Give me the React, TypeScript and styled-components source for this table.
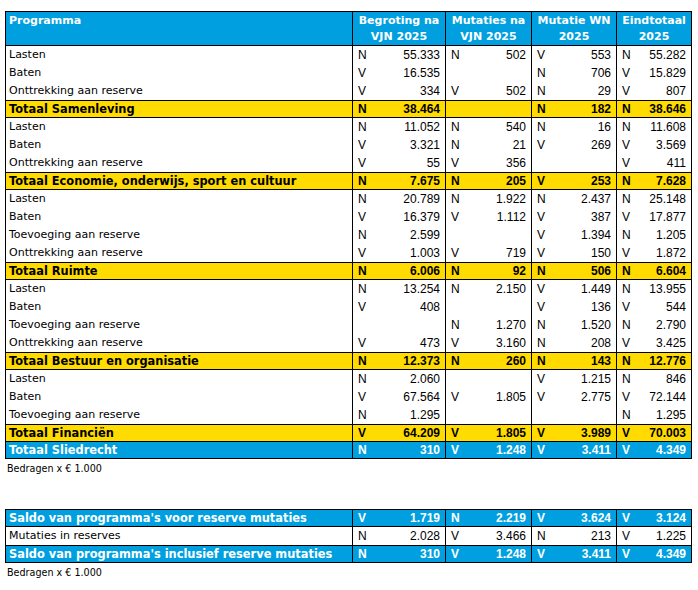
import React from "react";
import styled, { createGlobalStyle, css } from "styled-components";

type Kind = "plain" | "total" | "grand";
type Cell = [string, string] | null;
type Line = { label: string; kind: Kind; cells: Cell[] };

const GlobalStyle = createGlobalStyle`
  html, body {
    margin: 0;
    padding: 0;
    background: #ffffff;
  }
`;

const blue = "#009fe0";
const yellow = "#ffdb00";

const main: Line[] = [
  { label: "Lasten", kind: "plain", cells: [["N", "55.333"], ["N", "502"], ["V", "553"], ["N", "55.282"]] },
  { label: "Baten", kind: "plain", cells: [["V", "16.535"], null, ["N", "706"], ["V", "15.829"]] },
  { label: "Onttrekking aan reserve", kind: "plain", cells: [["V", "334"], ["V", "502"], ["N", "29"], ["V", "807"]] },
  { label: "Totaal Samenleving", kind: "total", cells: [["N", "38.464"], null, ["N", "182"], ["N", "38.646"]] },
  { label: "Lasten", kind: "plain", cells: [["N", "11.052"], ["N", "540"], ["N", "16"], ["N", "11.608"]] },
  { label: "Baten", kind: "plain", cells: [["V", "3.321"], ["N", "21"], ["V", "269"], ["V", "3.569"]] },
  { label: "Onttrekking aan reserve", kind: "plain", cells: [["V", "55"], ["V", "356"], null, ["V", "411"]] },
  { label: "Totaal Economie, onderwijs, sport en cultuur", kind: "total", cells: [["N", "7.675"], ["N", "205"], ["V", "253"], ["N", "7.628"]] },
  { label: "Lasten", kind: "plain", cells: [["N", "20.789"], ["N", "1.922"], ["N", "2.437"], ["N", "25.148"]] },
  { label: "Baten", kind: "plain", cells: [["V", "16.379"], ["V", "1.112"], ["V", "387"], ["V", "17.877"]] },
  { label: "Toevoeging aan reserve", kind: "plain", cells: [["N", "2.599"], null, ["V", "1.394"], ["N", "1.205"]] },
  { label: "Onttrekking aan reserve", kind: "plain", cells: [["V", "1.003"], ["V", "719"], ["V", "150"], ["V", "1.872"]] },
  { label: "Totaal Ruimte", kind: "total", cells: [["N", "6.006"], ["N", "92"], ["N", "506"], ["N", "6.604"]] },
  { label: "Lasten", kind: "plain", cells: [["N", "13.254"], ["N", "2.150"], ["V", "1.449"], ["N", "13.955"]] },
  { label: "Baten", kind: "plain", cells: [["V", "408"], null, ["V", "136"], ["V", "544"]] },
  { label: "Toevoeging aan reserve", kind: "plain", cells: [null, ["N", "1.270"], ["N", "1.520"], ["N", "2.790"]] },
  { label: "Onttrekking aan reserve", kind: "plain", cells: [["V", "473"], ["V", "3.160"], ["N", "208"], ["V", "3.425"]] },
  { label: "Totaal Bestuur en organisatie", kind: "total", cells: [["N", "12.373"], ["N", "260"], ["N", "143"], ["N", "12.776"]] },
  { label: "Lasten", kind: "plain", cells: [["N", "2.060"], null, ["V", "1.215"], ["N", "846"]] },
  { label: "Baten", kind: "plain", cells: [["V", "67.564"], ["V", "1.805"], ["V", "2.775"], ["V", "72.144"]] },
  { label: "Toevoeging aan reserve", kind: "plain", cells: [["N", "1.295"], null, null, ["N", "1.295"]] },
  { label: "Totaal Financiën", kind: "total", cells: [["V", "64.209"], ["V", "1.805"], ["V", "3.989"], ["V", "70.003"]] },
  { label: "Totaal Sliedrecht", kind: "grand", cells: [["N", "310"], ["V", "1.248"], ["V", "3.411"], ["V", "4.349"]] },
];

const saldo: Line[] = [
  { label: "Saldo van programma's voor reserve mutaties", kind: "grand", cells: [["V", "1.719"], ["N", "2.219"], ["V", "3.624"], ["V", "3.124"]] },
  { label: "Mutaties in reserves", kind: "plain", cells: [["N", "2.028"], ["V", "3.466"], ["N", "213"], ["V", "1.225"]] },
  { label: "Saldo van programma's inclusief reserve mutaties", kind: "grand", cells: [["N", "310"], ["V", "1.248"], ["V", "3.411"], ["V", "4.349"]] },
];

const heads = [
  ["Begroting na", "VJN 2025"],
  ["Mutaties na", "VJN 2025"],
  ["Mutatie WN", "2025"],
  ["Eindtotaal", "2025"],
];

// [sign column, amount column]
const widths = [
  [22, 71],
  [22, 64],
  [22, 63],
  [22, 53],
];

const Page = styled.div`
  padding: 11px 0 0 5px;
  display: flex;
  flex-direction: column;
`;

const Sheet = styled.table`
  border-collapse: collapse;
  table-layout: fixed;
  width: 687px;
  border: 1px solid #000;
`;

const HeadCell = styled.th<{ $left?: boolean }>`
  background: ${blue};
  color: #fff;
  font-family: "DejaVu Sans", Verdana, sans-serif;
  font-weight: bold;
  font-size: 11px;
  line-height: 16px;
  height: 32px;
  padding: 1px 3px 0;
  vertical-align: top;
  text-align: ${(p) => (p.$left ? "left" : "center")};
  border: 1px solid #000;
  white-space: nowrap;
`;

const Row = styled.tr<{ $kind: Kind }>`
  background: ${(p) => (p.$kind === "total" ? yellow : p.$kind === "grand" ? blue : "#fff")};
  color: ${(p) => (p.$kind === "grand" ? "#fff" : "#000")};
  font-weight: ${(p) => (p.$kind === "plain" ? "normal" : "bold")};
  td {
    height: 18px;
    ${(p) =>
      p.$kind !== "plain" &&
      css`
        height: 16px;
        border-top: 1px solid #000;
        border-bottom: 1px solid #000;
      `}
  }
  td:first-child {
    font-size: ${(p) => (p.$kind === "plain" ? "11px" : "11.4px")};
  }
`;

const LabelCell = styled.td`
  font-family: "DejaVu Sans", Verdana, sans-serif;
  line-height: 16px;
  padding: 0 3px;
  border-right: 1px solid #000;
  white-space: nowrap;
  overflow: hidden;
`;

const SignCell = styled.td`
  font-family: "Liberation Sans", Arial, sans-serif;
  font-size: 12px;
  line-height: 16px;
  padding: 0 0 0 5px;
  border-left: 1px solid #000;
`;

const AmountCell = styled.td`
  font-family: "Liberation Sans", Arial, sans-serif;
  font-size: 12px;
  line-height: 16px;
  padding: 0 5px 0 0;
  text-align: right;
  border-right: 1px solid #000;
`;

const Note = styled.div<{ $gap: number }>`
  font-family: "DejaVu Sans", Verdana, sans-serif;
  font-size: 9.6px;
  color: #000;
  padding: 4px 0 0 2px;
  margin-bottom: ${(p) => p.$gap}px;
`;

function Cols() {
  return (
    <colgroup>
      <col style={{ width: 347 }} />
      {widths.map(([s, a], i) => (
        <React.Fragment key={i}>
          <col style={{ width: s }} />
          <col style={{ width: a }} />
        </React.Fragment>
      ))}
    </colgroup>
  );
}

function Lines({ rows }: { rows: Line[] }) {
  return (
    <>
      {rows.map((r, i) => (
        <Row key={i} $kind={r.kind}>
          <LabelCell>{r.label}</LabelCell>
          {r.cells.map((c, j) => (
            <React.Fragment key={j}>
              <SignCell>{c ? c[0] : ""}</SignCell>
              <AmountCell>{c ? c[1] : ""}</AmountCell>
            </React.Fragment>
          ))}
        </Row>
      ))}
    </>
  );
}

export default function App() {
  return (
    <Page>
      <GlobalStyle />
      <Sheet>
        <Cols />
        <thead>
          <tr>
            <HeadCell $left>Programma</HeadCell>
            {heads.map((h, i) => (
              <HeadCell key={i} colSpan={2}>
                {h[0]}
                <br />
                {h[1]}
              </HeadCell>
            ))}
          </tr>
        </thead>
        <tbody>
          <Lines rows={main} />
        </tbody>
      </Sheet>
      <Note $gap={35}>Bedragen x € 1.000</Note>
      <Sheet>
        <Cols />
        <tbody>
          <Lines rows={saldo} />
        </tbody>
      </Sheet>
      <Note $gap={0}>Bedragen x € 1.000</Note>
    </Page>
  );
}
